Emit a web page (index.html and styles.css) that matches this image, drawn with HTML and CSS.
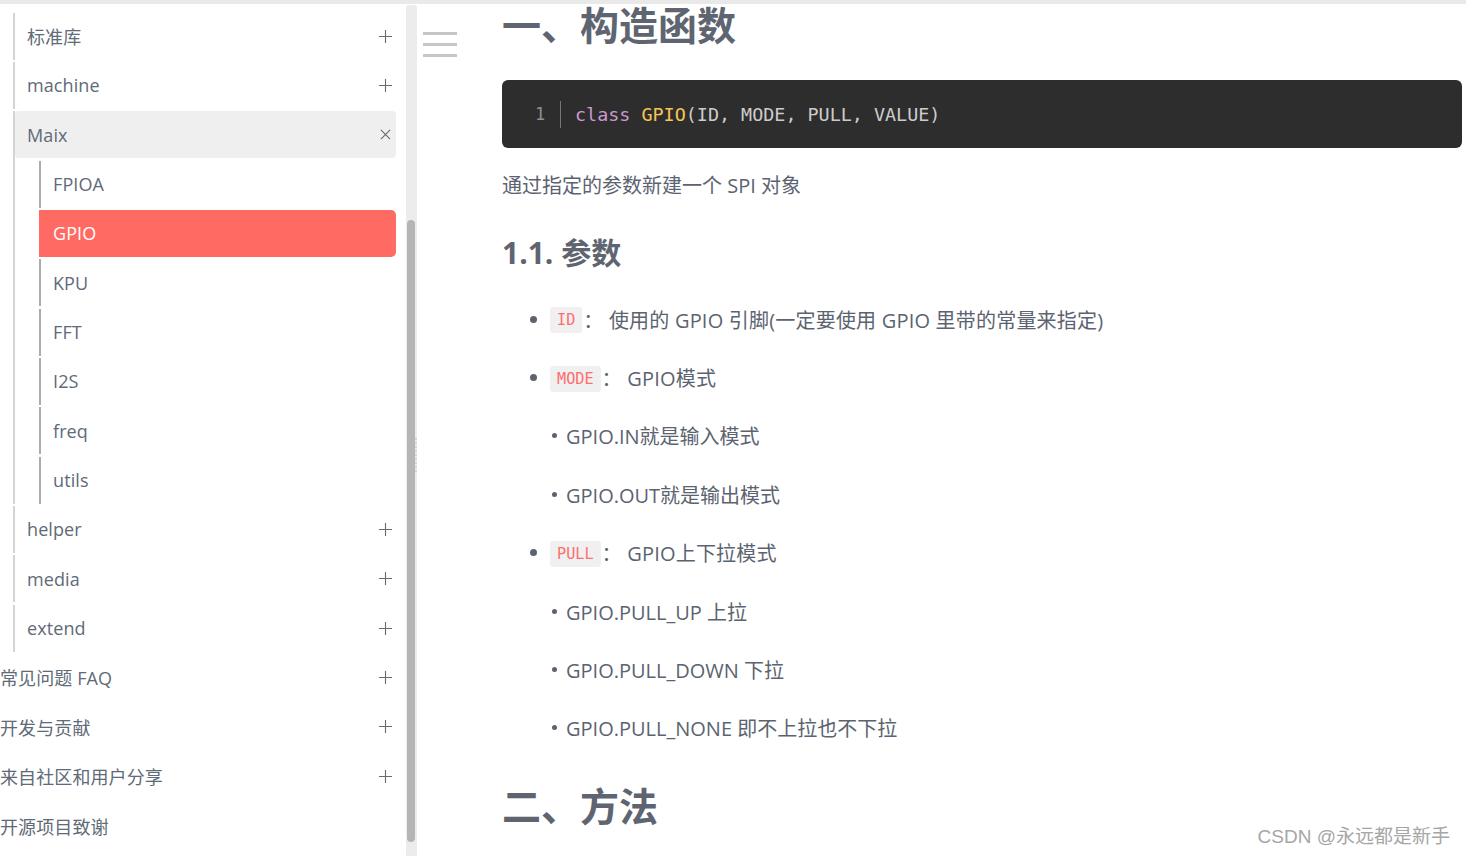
FILE: index.html
```html
<!DOCTYPE html>
<html lang="zh-CN">
<head>
<meta charset="utf-8">
<title>GPIO - MaixPy 文档</title>
<link rel="stylesheet" href="styles.css">
</head>
<body>
<div class="topbar"></div>
<div class="layout">
  <nav class="sidebar">
    <ul class="nav l0">
      <li class="group">
        <ul class="nav l1">
          <li><div class="row"><span>标准库</span><svg class="ic plus" viewBox="0 0 16 16"><path d="M8 1v14M1 8h14"/></svg></div></li>
          <li><div class="row"><span>machine</span><svg class="ic plus" viewBox="0 0 16 16"><path d="M8 1v14M1 8h14"/></svg></div></li>
          <li class="open">
            <div class="row current"><span>Maix</span><svg class="ic close" viewBox="0 0 12 12"><path d="M1 1l10 10M11 1L1 11"/></svg></div>
            <ul class="nav l2">
              <li><div class="row"><span>FPIOA</span></div></li>
              <li class="active"><div class="row"><span>GPIO</span></div></li>
              <li><div class="row"><span>KPU</span></div></li>
              <li><div class="row"><span>FFT</span></div></li>
              <li><div class="row"><span>I2S</span></div></li>
              <li><div class="row"><span>freq</span></div></li>
              <li><div class="row"><span>utils</span></div></li>
            </ul>
          </li>
          <li><div class="row"><span>helper</span><svg class="ic plus" viewBox="0 0 16 16"><path d="M8 1v14M1 8h14"/></svg></div></li>
          <li><div class="row"><span>media</span><svg class="ic plus" viewBox="0 0 16 16"><path d="M8 1v14M1 8h14"/></svg></div></li>
          <li><div class="row"><span>extend</span><svg class="ic plus" viewBox="0 0 16 16"><path d="M8 1v14M1 8h14"/></svg></div></li>
        </ul>
      </li>
      <li><div class="row top"><span>常见问题 FAQ</span><svg class="ic plus" viewBox="0 0 16 16"><path d="M8 1v14M1 8h14"/></svg></div></li>
      <li><div class="row top"><span>开发与贡献</span><svg class="ic plus" viewBox="0 0 16 16"><path d="M8 1v14M1 8h14"/></svg></div></li>
      <li><div class="row top"><span>来自社区和用户分享</span><svg class="ic plus" viewBox="0 0 16 16"><path d="M8 1v14M1 8h14"/></svg></div></li>
      <li><div class="row top"><span>开源项目致谢</span></div></li>
    </ul>
  </nav>
  <div class="scrollbar"><div class="thumb"><span class="grip"></span></div></div>
  <div class="toggle"><span></span><span></span><span></span></div>
  <main class="content">
    <h1>一、构造函数</h1>
    <div class="code">
      <span class="ln">1</span>
      <code><span class="kw">class</span> <span class="cls">GPIO</span>(ID, MODE, PULL, VALUE)</code>
    </div>
    <p class="text">通过指定的参数新建一个 SPI 对象</p>
    <h2>1.1. 参数</h2>
    <ul class="params">
      <li><div class="item"><code class="inline">ID</code><span>：&nbsp;使用的 GPIO 引脚(一定要使用 GPIO 里带的常量来指定)</span></div></li>
      <li><div class="item"><code class="inline">MODE</code><span>：&nbsp;GPIO模式</span></div>
        <ul class="sub">
          <li>GPIO.IN就是输入模式</li>
          <li>GPIO.OUT就是输出模式</li>
        </ul>
      </li>
      <li><div class="item"><code class="inline">PULL</code><span>：&nbsp;GPIO上下拉模式</span></div>
        <ul class="sub">
          <li>GPIO.PULL_UP 上拉</li>
          <li>GPIO.PULL_DOWN 下拉</li>
          <li>GPIO.PULL_NONE 即不上拉也不下拉</li>
        </ul>
      </li>
    </ul>
    <h1 class="second">二、方法</h1>
  </main>
</div>
<div class="watermark">CSDN @永远都是新手</div>
</body>
</html>
```
FILE: styles.css
```css
* { box-sizing: border-box; }
html, body { margin: 0; padding: 0; }
body {
  width: 1466px;
  height: 856px;
  overflow: hidden;
  background: #fff;
  font-family: "Open Sans", "Noto Sans CJK SC", sans-serif;
  color: #5c6370;
  position: relative;
}
.topbar {
  height: 4px;
  background: #e9e9e9;
}
.layout {
  display: flex;
  height: 852px;
}

/* ---------- sidebar ---------- */
.sidebar {
  width: 406px;
  flex: none;
  padding: 8.5px 10px 0 0;
  font-size: 18px;
  color: #616a77;
}
.nav {
  list-style: none;
  margin: 0;
  padding: 0;
  display: flex;
  flex-direction: column;
  gap: 2.35px;
}
.l1 { margin-left: 13px; }
.l1 > li { border-left: 2px solid #d4d4d4; }
.l1 > li.open { display: flex; flex-direction: column; gap: 2.35px; }
.l2 { margin-left: 24px; }
.l2 > li { border-left: 2px solid #ababab; }
.row {
  height: 47px;
  display: flex;
  align-items: center;
  justify-content: space-between;
  padding: 0 3px 0 12px;
  border-radius: 4px;
  white-space: nowrap;
  letter-spacing: 0.1px;
}
.row.top { padding-left: 0; }
.row.current { background: #efefef; }
.l2 > li.active { border-left-color: #ff6a63; }
.l2 > li.active .row {
  background: #ff6a63;
  color: #fff;
  border-radius: 0 5px 5px 0;
}
.ic {
  flex: none;
  fill: none;
  stroke: #666b73;
  stroke-width: 1.2;
}
.ic.plus { width: 15px; height: 15px; }
.ic.close { width: 11px; height: 11px; margin-right: 2px; }

/* ---------- fake scrollbar ---------- */
.scrollbar {
  width: 11px;
  flex: none;
  margin-top: 1px;
  background: #ececec;
  padding: 215px 2px 0 1px;
  border-radius: 3px 3px 0 0;
}
.thumb {
  height: 622px;
  background: #b5b5b5;
  border-radius: 4px;
  position: relative;
}
.grip {
  position: absolute;
  right: -2px;
  top: 218px;
  width: 2px;
  height: 34px;
  border-left: 2px dotted #d6d6d6;
}

/* ---------- toggle ---------- */
.toggle {
  width: 85px;
  flex: none;
  padding: 28px 0 0 6px;
  display: flex;
  flex-direction: column;
  gap: 8px;
}
.toggle span {
  display: block;
  width: 34px;
  height: 3px;
  background: #c6c6c6;
}

/* ---------- content ---------- */
.content {
  width: 960px;
  flex: none;
  font-size: 20px;
}
h1 {
  margin: -3px 0 0 0;
  font-size: 39px;
  line-height: 48px;
  font-weight: 700;
  color: #5e6571;
}
h1.second { margin-top: 25px; }
.code {
  margin-top: 31px;
  height: 68px;
  background: #2d2d2d;
  border-radius: 6px;
  display: flex;
  align-items: center;
  padding-left: 33px;
  font-family: "DejaVu Sans Mono", "Liberation Mono", monospace;
  font-size: 18.4px;
  color: #cccccc;
}
.code .ln {
  color: #8f8f8f;
  width: 26px;
  height: 27px;
  line-height: 27px;
  border-right: 1px solid #767676;
  margin-right: 14px;
  font-size: 17px;
}
.code code { font-family: inherit; }
.code .kw { color: #cc99cd; }
.code .cls { color: #f8c555; }
.text {
  margin: 23px 0 0 0;
  line-height: 30px;
}
h2 {
  margin: 32px 0 0 0;
  font-size: 30px;
  line-height: 40px;
  font-weight: 700;
  color: #5e6571;
}
.params {
  list-style: none;
  margin: 17px 0 0 0;
  padding: 0 0 0 28px;
}
.item {
  height: 58.4px;
  display: flex;
  align-items: center;
  white-space: nowrap;
}
.item::before {
  content: "";
  width: 7px;
  height: 7px;
  border-radius: 50%;
  background: #5c6370;
  margin-right: 13px;
  flex: none;
}
.item span { margin-left: 1px; letter-spacing: 0.2px; }
.inline {
  font-family: "DejaVu Sans Mono", "Liberation Mono", monospace;
  font-size: 15.2px;
  color: #ff6d6d;
  background: #f0f0f0;
  border-radius: 3px;
  height: 26px;
  line-height: 27px;
  padding: 0 7px;
  margin-top: 2px;
}
.sub {
  list-style: none;
  margin: 0;
  padding: 0 0 0 22px;
}
.sub li {
  height: 58.4px;
  display: flex;
  align-items: center;
  white-space: nowrap;
}
.sub li::before {
  content: "";
  width: 5px;
  height: 5px;
  border-radius: 50%;
  background: #5c6370;
  margin-right: 9px;
  flex: none;
}

/* ---------- watermark ---------- */
.watermark {
  position: absolute;
  right: 16px;
  bottom: 8px;
  font-family: "Liberation Sans", "Noto Sans CJK SC", sans-serif;
  font-size: 19px;
  color: #a6a6a6;
  text-shadow: 1px 1px 1px rgba(255,255,255,0.9);
}
```
